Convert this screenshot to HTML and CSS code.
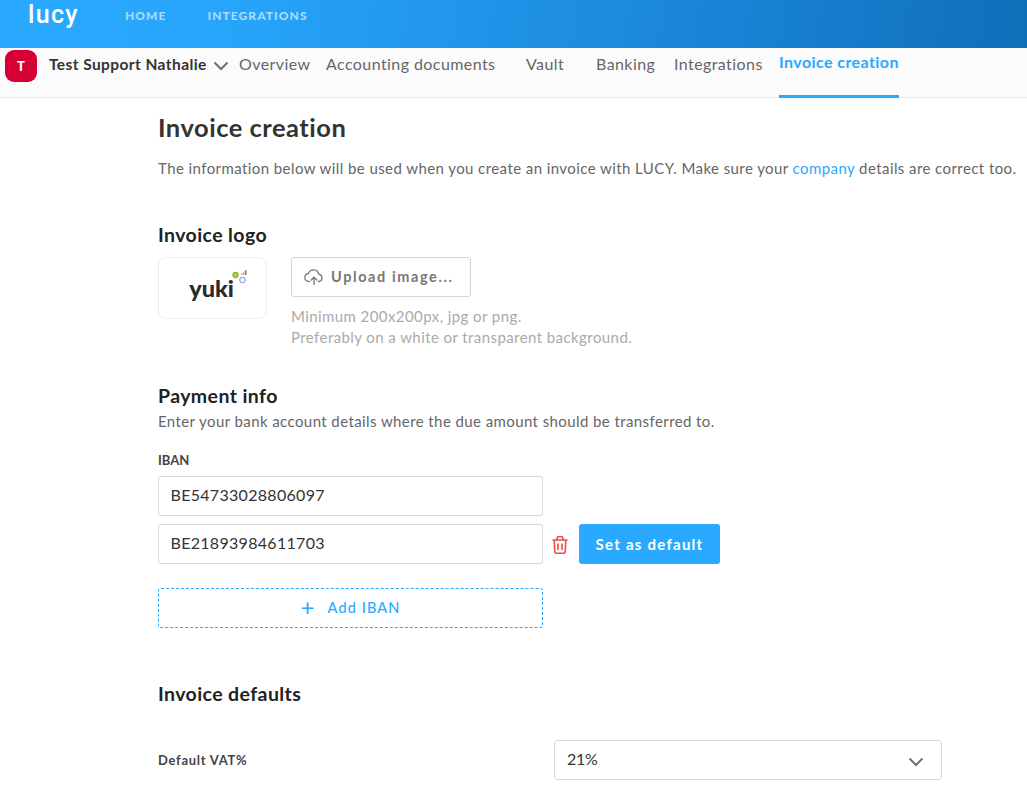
FILE: index.html
```html
<!DOCTYPE html>
<html lang="en">
<head>
<meta charset="utf-8">
<title>Invoice creation</title>
<link rel="stylesheet" href="styles.css">
</head>
<body>
<header class="topbar">
  <span class="brand">lucy</span>
  <nav class="topnav">
    <a class="topnav-link">HOME</a>
    <a class="topnav-link">INTEGRATIONS</a>
  </nav>
</header>
<div class="subbar">
  <div class="company">
    <span class="avatar">T</span>
    <span class="company-name">Test Support Nathalie</span>
    <svg class="company-chevron" width="16" height="10" viewBox="0 0 16 10"><path d="M1.500 1.500 8 8l6.500-6.500" fill="none" stroke="#6f6f6f" stroke-width="2"/></svg>
  </div>
  <nav class="tabs">
    <a class="tab tab-overview">Overview</a>
    <a class="tab tab-accounting">Accounting documents</a>
    <a class="tab tab-vault">Vault</a>
    <a class="tab tab-banking">Banking</a>
    <a class="tab tab-integrations">Integrations</a>
    <a class="tab tab-active">Invoice creation</a>
  </nav>
</div>
<main class="content">
  <h1 class="page-title">Invoice creation</h1>
  <p class="intro">The information below will be used when you create an invoice with LUCY. Make sure your <a class="link">company</a> details are correct too.</p>

  <section class="logo-section">
    <h2 class="section-title">Invoice logo</h2>
    <div class="logo-row">
      <div class="logo-box">
        <span class="yuki">yuki</span>
        <svg class="yuki-marks" width="18" height="16" viewBox="0 0 18 16">
          <circle cx="3.500" cy="6" r="2.600" fill="#e8b93a" stroke="#6cbf3f" stroke-width="1.200"/>
          <circle cx="10.500" cy="11" r="2.800" fill="none" stroke="#6d8fe0" stroke-width="1"/>
          <rect x="9" y="4" width="1.600" height="2" fill="#d7a3c8"/>
          <rect x="11" y="2.500" width="1.600" height="3.500" fill="#e0b36a"/>
          <rect x="13" y="1" width="1.600" height="5" fill="#8a8a8a"/>
        </svg>
      </div>
      <div class="upload">
        <button class="upload-btn" type="button">
          <svg width="20" height="18" viewBox="0 0 20 18"><path d="M5.500 13.500H5A4 4 0 0 1 4.500 5.500 5.300 5.300 0 0 1 14.700 6.200 3.700 3.700 0 0 1 15 13.500h-.5M10 16.500V9.500M7.200 12 10 9.200 12.800 12" fill="none" stroke="#777" stroke-width="1.300" stroke-linecap="round" stroke-linejoin="round"/></svg>
          <span class="upload-text">Upload image...</span>
        </button>
        <p class="hint">Minimum 200x200px, jpg or png.<br>Preferably on a white or transparent background.</p>
      </div>
    </div>
  </section>

  <section class="payment-section">
    <h2 class="section-title">Payment info</h2>
    <p class="section-sub">Enter your bank account details where the due amount should be transferred to.</p>
    <label class="field-label">IBAN</label>
    <div class="iban-row"><div class="input">BE54733028806097</div></div>
    <div class="iban-row">
      <div class="input">BE21893984611703</div>
      <svg class="trash" width="18" height="20" viewBox="0 0 18 20"><path d="M1.500 5h15M6 5V3.200C6 2.300 6.600 1.800 7.400 1.800h3.200c.8 0 1.400.5 1.400 1.400V5M3.200 5l.6 11.600c.1 1 .7 1.600 1.600 1.600h7.200c.9 0 1.500-.6 1.600-1.600L14.800 5M7 8.500v6.500M11 8.500v6.500" fill="none" stroke="#f0483e" stroke-width="1.600"/></svg>
      <button class="default-btn" type="button">Set as default</button>
    </div>
    <button class="add-btn" type="button"><span class="add-plus">+</span>Add IBAN</button>
  </section>

  <section class="defaults-section">
    <h2 class="section-title">Invoice defaults</h2>
    <div class="default-row">
      <label class="default-label">Default VAT%</label>
      <div class="select">
        <span class="select-value">21%</span>
        <svg class="select-chevron" width="16" height="10" viewBox="0 0 16 10"><path d="M1.500 1.500 8 8l6.500-6.500" fill="none" stroke="#6f6f6f" stroke-width="2"/></svg>
      </div>
    </div>
  </section>
</main>
</body>
</html>
```
FILE: styles.css
```css
* { box-sizing: border-box; }
html, body { height: 789px; overflow: hidden; }
body {
  margin: 0;
  background: #fff;
  color: #333;
  font-family: "Lato", "Open Sans", sans-serif;
}
.topbar {
  height: 48px;
  display: flex;
  align-items: flex-start;
  padding-left: 28px;
  background: linear-gradient(100deg, #29a9ff 0%, #27a5fb 22%, #1a85d8 68%, #0f6fb9 100%);
}
.brand {
  width: 97px;
  color: #fff;
  font-family: "Roboto", sans-serif;
  font-size: 25px;
  font-weight: 500;
  line-height: 29px;
  letter-spacing: 1.300px;
}
.topnav { display: flex; gap: 41px; padding-top: 8px; }
.topnav-link {
  color: #a9dafc;
  font-size: 12px;
  font-weight: 900;
  line-height: 16px;
  letter-spacing: 1.050px;
}
.subbar {
  height: 50px;
  display: flex;
  align-items: flex-start;
  background: #fbfbfb;
  border-bottom: 1px solid #ececec;
}
.company { display: flex; align-items: flex-start; width: 239px; padding: 2px 0 0 5px; }
.avatar {
  width: 32px;
  height: 32px;
  border-radius: 9px;
  background: #d70035;
  color: #fff;
  font-size: 13px;
  font-weight: 900;
  line-height: 32px;
  text-align: center;
}
.company-name {
  margin: 4px 0 0 12px;
  font-size: 15.500px;
  font-weight: 700;
  line-height: 20px;
  letter-spacing: .42px;
  white-space: nowrap;
}
.company-chevron { margin: 11px 0 0 6px; flex: none; }
.tabs { display: flex; align-items: flex-start; height: 49px; }
.tab {
  margin-top: 6px;
  color: #666;
  font-size: 16px;
  line-height: 20px;
  letter-spacing: .42px;
  white-space: nowrap;
}
.tab-overview { width: 87px; }
.tab-accounting { width: 200px; }
.tab-vault { width: 70px; }
.tab-banking { width: 78px; }
.tab-integrations { width: 105px; }
.tab-active {
  margin-top: 0;
  width: 120px;
  height: 50px;
  padding: 4px 0 0;
  color: #29a9ff;
  font-weight: 700;
  letter-spacing: .42px;
  border-bottom: 3px solid #29a9ff;
}
.content { padding: 14px 0 0 158px; }
.page-title {
  margin: 0;
  font-size: 25.500px;
  font-weight: 700;
  line-height: 30px;
  letter-spacing: .5px;
  color: #333;
}
.intro {
  margin: 16px 0 0;
  color: #666;
  font-size: 15px;
  line-height: 20px;
  letter-spacing: .42px;
  white-space: nowrap;
}
.link { color: #29a9ff; }
.section-title {
  margin: 0;
  color: #222;
  font-size: 19.500px;
  font-weight: 700;
  line-height: 24px;
  letter-spacing: .4px;
}
.logo-section { margin-top: 45px; }
.logo-row { display: flex; gap: 24px; margin-top: 10px; }
.logo-box {
  width: 109px;
  height: 62px;
  border: 1px solid #eee;
  border-radius: 8px;
  display: flex;
  justify-content: center;
  align-items: flex-start;
  padding: 15px 0 0 6px;
}
.yuki {
  color: #2b2b2b;
  font-size: 23.500px;
  font-weight: 900;
  line-height: 30px;
}
.yuki-marks { margin: -4px -8px 0 -2px; flex: none; }
.upload-btn {
  width: 180px;
  height: 40px;
  display: flex;
  align-items: center;
  gap: 7px;
  padding: 0 0 0 12px;
  background: #fff;
  border: 1px solid #d5d5d5;
  border-radius: 3px;
  color: #777;
  font-family: inherit;
  font-size: 14.500px;
  font-weight: 700;
  letter-spacing: 1.600px;
}
.upload-text { padding-bottom: 2px; }
.hint {
  margin: 9px 0 0;
  color: #aaa;
  font-size: 15px;
  line-height: 21px;
  letter-spacing: .42px;
}
.payment-section { margin-top: 36px; }
.section-sub {
  margin: 3px 0 0;
  color: #666;
  font-size: 15px;
  line-height: 20px;
  letter-spacing: .41px;
}
.field-label {
  display: block;
  margin-top: 21px;
  color: #444;
  font-size: 13px;
  font-weight: 700;
  line-height: 16px;
}
.iban-row { display: flex; align-items: center; margin-top: 8px; height: 40px; }
.input {
  width: 385px;
  height: 40px;
  padding-left: 11.500px;
  border: 1px solid #d9d9d9;
  border-radius: 3px;
  color: #333;
  font-size: 16px;
  line-height: 36px;
  letter-spacing: .3px;
}
.trash { margin: 2px 0 0 8px; }
.default-btn {
  width: 141px;
  height: 40px;
  margin-left: 10px;
  padding-bottom: 2px;
  border: 0;
  border-radius: 3px;
  background: #29a9ff;
  color: #fff;
  font-family: inherit;
  font-size: 15px;
  font-weight: 700;
  letter-spacing: 1.250px;
}
.add-btn {
  display: block;
  width: 385px;
  height: 40px;
  margin-top: 24px;
  padding-bottom: 2px;
  background: #fff;
  border: 1px dashed #29a9ff;
  border-radius: 3px;
  color: #29a9ff;
  font-family: inherit;
  font-size: 14.500px;
  font-weight: 500;
  letter-spacing: 1.100px;
}
.add-plus { margin-right: 12px; font-size: 24px; font-weight: 400; line-height: 16px; vertical-align: -3px; }
.defaults-section { margin-top: 54px; }
.default-row { display: flex; align-items: center; justify-content: space-between; width: 784px; margin-top: 34px; }
.default-label { color: #444; font-size: 13px; font-weight: 700; letter-spacing: .72px; }
.select {
  width: 388px;
  height: 40px;
  display: flex;
  align-items: center;
  justify-content: space-between;
  padding: 0 17px 0 12px;
  border: 1px solid #d9d9d9;
  border-radius: 3px;
  font-size: 16px;
}
.select-value { padding-bottom: 3px; letter-spacing: -.3px; }
.select-chevron { margin-top: 3px; }
```
